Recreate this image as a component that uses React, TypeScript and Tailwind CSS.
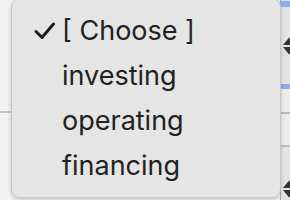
import React from "react";

const OPTIONS = ["[ Choose ]", "investing", "operating", "financing"];

function Stepper() {
  return (
    <svg width="14" height="18" viewBox="0 0 14 18" className="block shrink-0">
      <path d="M1 8 L7 0.5 L13 8 Z" fill="#2b3440" />
      <path d="M1 10 L7 17.5 L13 10 Z" fill="#2b3440" />
    </svg>
  );
}

function CheckMark() {
  return (
    <svg width="22" height="18" viewBox="0 0 22 18" className="block">
      <path
        d="M2 9.5 L8 15.5 L19.5 2"
        fill="none"
        stroke="#1c1c1c"
        strokeWidth="3"
        strokeLinecap="round"
        strokeLinejoin="round"
      />
    </svg>
  );
}

export default function App() {
  return (
    <div className="relative h-[200px] w-[290px] overflow-hidden bg-[#f2f2f2] font-['Inter','Liberation_Sans',sans-serif]">
      {/* page behind the popup */}
      <div className="flex h-full">
        <div className="flex w-[11px] flex-col">
          <div className="h-[111px]" />
          <div className="h-[2px] bg-[#c4c4c4]" />
          <div className="flex-1" />
        </div>
        <div className="flex-1" />
        <div className="flex w-[10px] flex-col border-l border-[#a9a9a9] bg-[#e9e9e9]">
          <div className="h-px bg-[#dcdcdc]" />
          <div className="h-[6px] bg-[#8daeea]" />
          <div className="flex h-[77px] items-center overflow-hidden bg-[#e3e3e3] pl-px">
            <Stepper />
          </div>
          <div className="h-[5px] bg-[#8daeea]" />
          <div className="h-[23px] bg-[#ececec]" />
          <div className="h-[2px] bg-[#bdbdbd]" />
          <div className="h-[31px] bg-[#ececec]" />
          <div className="h-[2px] bg-[#bdbdbd]" />
          <div className="flex flex-1 items-end overflow-hidden bg-[#e3e3e3] pb-[2px] pl-px pt-[20px]">
            <Stepper />
          </div>
        </div>
      </div>

      {/* dropdown popup */}
      <div className="absolute left-[11px] top-[-2px] h-[200px] w-[270px] rounded-[9px] border border-[#c6c6c6] bg-[#e5e5e5] pt-[9px] shadow-[0_2px_4px_rgba(0,0,0,0.18)]">
        <ul className="flex flex-col">
          {OPTIONS.map((opt, i) => (
            <li key={opt} className="flex h-[45px] items-center">
              <span className="flex w-[50px] justify-end pr-[6px]">
                {i === 0 && <CheckMark />}
              </span>
              <span className="text-[27px] leading-none text-[#222222]">{opt}</span>
            </li>
          ))}
        </ul>
      </div>
    </div>
  );
}
